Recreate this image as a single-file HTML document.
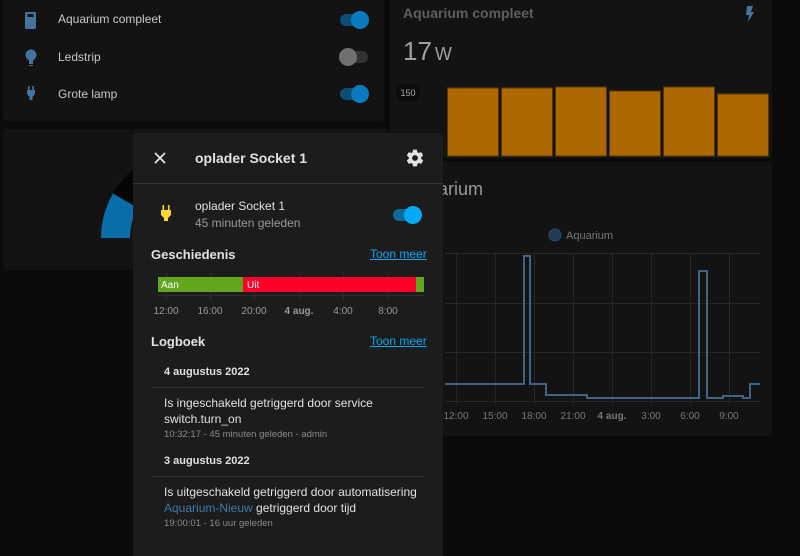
<!DOCTYPE html>
<html><head><meta charset="utf-8"><style>
*{margin:0;padding:0;box-sizing:border-box}
body{width:800px;height:556px;overflow:hidden;background:#0b0b0b;font-family:"Liberation Sans",sans-serif;position:relative;color:#e1e1e1}
.abs{position:absolute}
.card{position:absolute;background:#131313;border-radius:4px}
.t{position:absolute;white-space:nowrap}
.tog{position:absolute;width:28px;height:12px;border-radius:6px}
.tog i{position:absolute;top:-3px;width:18px;height:18px;border-radius:50%}
</style></head><body>
<div class="card" style="left:3px;top:-4px;width:381px;height:125px"></div>
<svg class="abs" style="left:22px;top:10px" width="18" height="100">
<rect x="3" y="2" width="11" height="17" rx="1.5" fill="#44739e"/><rect x="5.5" y="4" width="6" height="3" fill="#131313"/>
<circle cx="9" cy="45" r="5.5" fill="#44739e"/><rect x="7" y="50" width="4" height="4" fill="#44739e"/><rect x="7" y="55" width="4" height="1" fill="#44739e"/>
<rect x="6" y="76" width="1.6" height="4" fill="#44739e"/><rect x="10.4" y="76" width="1.6" height="4" fill="#44739e"/><path d="M5 80h8v4l-2.5 3v3h-3v-3L5 84z" fill="#44739e"/>
</svg>
<div class="t" style="left:58px;top:12px;font-size:12px;color:#c8c8c8">Aquarium compleet</div>
<div class="t" style="left:58px;top:50px;font-size:12px;color:#c8c8c8">Ledstrip</div>
<div class="t" style="left:58px;top:87px;font-size:12px;color:#c8c8c8">Grote lamp</div>
<div class="tog" style="left:340px;top:14px;background:#0a4f73"><i style="left:11px;background:#0a7bc0"></i></div>
<div class="tog" style="left:340px;top:51px;background:#333"><i style="left:-1px;background:#707070"></i></div>
<div class="tog" style="left:340px;top:88px;background:#0a4f73"><i style="left:11px;background:#0a7bc0"></i></div>

<div class="card" style="left:3px;top:129px;width:385px;height:141px"></div>
<svg class="abs" style="left:0;top:0" width="400" height="280">
<path d="M101 238 A89 89 0 0 1 113 193.5 L138 208 A60 60 0 0 0 130 238Z" fill="#0a6fa8"/>
<path d="M113 193.5 A89 89 0 0 1 145.5 161 L160 186 A60 60 0 0 0 138 208Z" fill="#050505"/>
</svg>

<div class="card" style="left:390px;top:-4px;width:382px;height:162px"></div>
<div class="t" style="left:403px;top:5px;font-size:14px;font-weight:bold;color:#5e5e5e">Aquarium compleet</div>
<svg class="abs" style="left:744px;top:5px" width="12" height="18"><path d="M3 1h6L7 7h3L4 17l1-7H2z" fill="#44739e"/></svg>
<div class="t" style="left:403px;top:36px;font-size:26px;color:#a0a0a0">17<span style="font-size:18px;margin-left:3px">W</span></div>
<div class="abs" style="left:396px;top:84px;width:24px;height:18px;border-radius:8px;background:#0b0b0b;color:#aaa;font-size:9px;text-align:center;line-height:18px">150</div>
<svg class="abs" style="left:440px;top:80px" width="332" height="80">
<g fill="#ad6800" stroke="#5a3800" stroke-width="1">
<rect x="7.5" y="8" width="51" height="68"/><rect x="61.5" y="8" width="51" height="68"/><rect x="115.5" y="7" width="51" height="69"/><rect x="169.5" y="11" width="51" height="65"/><rect x="223.5" y="7" width="51" height="69"/><rect x="277.5" y="14" width="51" height="62"/></g>
</svg>

<div class="card" style="left:390px;top:162px;width:382px;height:274px"></div>
<div class="t" style="left:406px;top:179px;font-size:18px;color:#9a9a9a">Aquarium</div>
<svg class="abs" style="left:390px;top:220px" width="382" height="216">
<circle cx="165" cy="15" r="6" fill="#1e3a56" stroke="#2b4d70"/>
<text x="176" y="19" font-size="11" fill="#777" font-family="Liberation Sans">Aquarium</text>
<g stroke="#262626" stroke-width="1">
<line x1="55" y1="33.5" x2="370" y2="33.5"/><line x1="55" y1="83.5" x2="370" y2="83.5"/><line x1="55" y1="132.5" x2="370" y2="132.5"/><line x1="55" y1="181.5" x2="370" y2="181.5"/>
<line x1="66.5" y1="33" x2="66.5" y2="185"/><line x1="105.5" y1="33" x2="105.5" y2="185"/><line x1="144.5" y1="33" x2="144.5" y2="185"/><line x1="183.5" y1="33" x2="183.5" y2="185"/><line x1="222.5" y1="33" x2="222.5" y2="185"/><line x1="261.5" y1="33" x2="261.5" y2="185"/><line x1="300.5" y1="33" x2="300.5" y2="185"/><line x1="339.5" y1="33" x2="339.5" y2="185"/></g>
<path d="M55 164H134V36H140V164H156V175H197V178H309V51H317V178H333V176H353V178H360V164H370" fill="none" stroke="#3f6485" stroke-width="2"/>
<g font-size="10" fill="#777" font-family="Liberation Sans" text-anchor="middle">
<text x="66" y="199">12:00</text><text x="105" y="199">15:00</text><text x="144" y="199">18:00</text><text x="183" y="199">21:00</text><text x="222" y="199" font-weight="bold">4 aug.</text><text x="261" y="199">3:00</text><text x="300" y="199">6:00</text><text x="339" y="199">9:00</text></g>
</svg>

<div class="abs" style="left:133px;top:133px;width:310px;height:423px;background:#1c1c1c;border-radius:4px 4px 0 0"></div>
<svg class="abs" style="left:153px;top:151px" width="14" height="14"><path d="M2 2L12 12M12 2L2 12" stroke="#e1e1e1" stroke-width="1.8"/></svg>
<div class="t" style="left:195px;top:150px;font-size:14px;font-weight:bold;color:#e1e1e1">oplader Socket 1</div>
<svg class="abs" style="left:405px;top:148px" width="20" height="20" viewBox="0 0 24 24"><path fill="#e1e1e1" d="M12 15.5A3.5 3.5 0 1 1 12 8.5a3.5 3.5 0 0 1 0 7m7.430-2.53c.04-.32.07-.64.07-.97s-.03-.66-.07-1l2.11-1.63c.19-.15.24-.42.12-.64l-2-3.46c-.12-.22-.39-.31-.61-.22l-2.49 1c-.52-.39-1.060-.73-1.69-.98l-.37-2.65A.506.506 0 0 0 14 2h-4c-.25 0-.46.18-.5.42l-.37 2.65c-.63.25-1.17.59-1.69.98l-2.49-1c-.22-.09-.49 0-.61.22l-2 3.46c-.13.22-.07.49.12.64L4.57 11c-.04.34-.07.67-.07 1s.03.65.07.97l-2.11 1.66c-.19.15-.25.42-.12.64l2 3.46c.12.22.39.3.61.22l2.49-1.010c.52.4 1.060.74 1.69.99l.37 2.65c.04.24.25.42.5.42h4c.25 0 .46-.18.5-.42l.37-2.65c.63-.26 1.17-.59 1.69-.99l2.49 1.010c.22.08.49 0 .61-.22l2-3.46c.12-.22.07-.49-.12-.64z"/></svg>
<div class="abs" style="left:133px;top:183px;width:310px;height:1px;background:#333"></div>
<svg class="abs" style="left:160px;top:205px" width="14" height="18"><rect x="2.5" y="0" width="1.6" height="5" fill="#fdd835"/><rect x="7.9" y="0" width="1.6" height="5" fill="#fdd835"/><path d="M1 5h10v5l-3 3v3H4v-3L1 10z" fill="#fdd835"/></svg>
<div class="t" style="left:195px;top:199px;font-size:12px;color:#e1e1e1">oplader Socket 1</div>
<div class="t" style="left:195px;top:216px;font-size:12px;color:#9a9a9a">45 minuten geleden</div>
<div class="tog" style="left:393px;top:209px;background:#0b6a9b"><i style="left:11px;background:#03a9f4"></i></div>
<div class="t" style="left:151px;top:247px;font-size:13px;font-weight:bold;color:#e1e1e1">Geschiedenis</div>
<div class="t" style="left:370px;top:247px;font-size:12px;color:#03a9f4;text-decoration:underline">Toon meer</div>
<svg class="abs" style="left:151px;top:270px" width="280" height="50">
<g stroke="#2e2e2e"><line x1="15.5" y1="3" x2="15.5" y2="30"/><line x1="59.5" y1="3" x2="59.5" y2="30"/><line x1="103.5" y1="3" x2="103.5" y2="30"/><line x1="148.5" y1="3" x2="148.5" y2="30"/><line x1="192.5" y1="3" x2="192.5" y2="30"/><line x1="237.5" y1="3" x2="237.5" y2="30"/><line x1="7" y1="25.5" x2="273" y2="25.5"/></g>
<rect x="7" y="7" width="85" height="15" fill="#62a61e"/><rect x="92" y="7" width="173" height="15" fill="#ff0029"/><rect x="265" y="7" width="8" height="15" fill="#62a61e"/>
<text x="10" y="18" font-size="10" fill="#fff" font-family="Liberation Sans">Aan</text><text x="96" y="18" font-size="10" fill="#fff" font-family="Liberation Sans">Uit</text>
<g font-size="10" fill="#999" font-family="Liberation Sans" text-anchor="middle"><text x="15" y="44">12:00</text><text x="59" y="44">16:00</text><text x="103" y="44">20:00</text><text x="148" y="44" font-weight="bold">4 aug.</text><text x="192" y="44">4:00</text><text x="237" y="44">8:00</text></g>
</svg>
<div class="t" style="left:151px;top:334px;font-size:13px;font-weight:bold;color:#e1e1e1">Logboek</div>
<div class="t" style="left:370px;top:334px;font-size:12px;color:#03a9f4;text-decoration:underline">Toon meer</div>
<div class="t" style="left:164px;top:366px;font-size:11px;font-weight:bold;color:#e1e1e1">4 augustus 2022</div>
<div class="abs" style="left:151px;top:387px;width:273px;height:1px;background:#333"></div>
<div class="t" style="left:164px;top:395px;font-size:12px;color:#e1e1e1;line-height:16px">Is ingeschakeld getriggerd door service<br>switch.turn_on</div>
<div class="t" style="left:164px;top:429px;font-size:9.5px;color:#8a8a8a">10:32:17 - 45 minuten geleden - admin</div>
<div class="t" style="left:164px;top:455px;font-size:11px;font-weight:bold;color:#e1e1e1">3 augustus 2022</div>
<div class="abs" style="left:151px;top:476px;width:273px;height:1px;background:#333"></div>
<div class="t" style="left:164px;top:484px;font-size:12px;color:#e1e1e1;line-height:16px">Is uitgeschakeld getriggerd door automatisering<br><span style="color:#3d78a8">Aquarium-Nieuw</span> getriggerd door tijd</div>
<div class="t" style="left:164px;top:518px;font-size:9.5px;color:#8a8a8a">19:00:01 - 16 uur geleden</div>
</body></html>
